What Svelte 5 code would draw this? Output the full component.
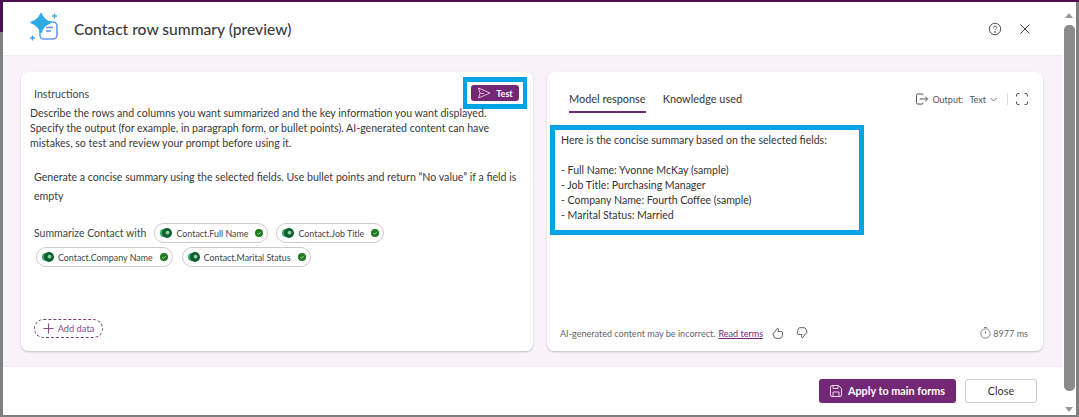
<script>
	const row1 = ['Contact.Full Name', 'Contact.Job Title']
	const row2 = ['Contact.Company Name', 'Contact.Marital Status']
	const lines = [
		'Here is the concise summary based on the selected fields:',
		'',
		'- Full Name: Yvonne McKay (sample)',
		'- Job Title: Purchasing Manager',
		'- Company Name: Fourth Coffee (sample)',
		'- Marital Status: Married'
	]
</script>

{#snippet chip(label)}
	<span class="chip">
		<svg width="12" height="10" viewBox="0 0 12 10">
			<circle cx="4" cy="5" r="4" fill="#34a868" />
			<circle cx="7" cy="5" r="5" fill="#0f5f30" />
			<circle cx="7.500" cy="4.600" r="1.900" fill="#8fd0a4" />
		</svg>
		<span>{label}</span>
		<span class="ok">
			<svg width="8" height="8" viewBox="0 0 8 8" fill="none" stroke="#cfe8cf" stroke-width=".8"><path d="M2.200 4.100l1.300 1.300 2.400-2.600" /></svg>
		</span>
	</span>
{/snippet}

<div class="screen">
	<div class="topbar"></div>
	<div class="middle">
		<div class="dialog">
			<header>
				<svg class="logo" width="32" height="34" viewBox="0 0 32 34">
					<defs>
						<linearGradient id="lg" x1="0" y1="0" x2="1" y2="1">
							<stop offset="0" stop-color="#39b6ea" />
							<stop offset="1" stop-color="#7a8cf5" />
						</linearGradient>
					</defs>
					<rect x="11" y="10" width="17" height="17" rx="4" fill="#fff" stroke="url(#lg)" stroke-width="1.600" />
					<path d="M12 2 Q14 8 21 10.500 Q14 13 12 20 Q10 13 2.500 10.500 Q10 8 12 2Z" fill="#2eabe6" stroke="#2eabe6" stroke-width="2" stroke-linejoin="round" />
					<path d="M17 15.500h7M17 19h5" stroke="#5a93ee" stroke-width="1.500" />
					<path d="M25.500 1.500v5M23 4h5" stroke="#35b3e8" stroke-width="1.400" />
					<path d="M3.500 23.500v5M1 26h5" stroke="#4a9aea" stroke-width="1.400" />
				</svg>
				<h1>Contact row summary (preview)</h1>
				<div class="head-icons">
					<svg width="14" height="14" viewBox="0 0 14 14" fill="none" stroke="#555">
						<circle cx="7" cy="7" r="5.700" />
						<path d="M5.400 5.600c0-2 3.300-2 3.300-.1 0 1.200-1.700 1.300-1.700 2.700" />
						<circle cx="7" cy="10" r=".4" fill="#555" />
					</svg>
					<svg width="12" height="12" viewBox="0 0 12 12" stroke="#444"><path d="M1.500 1.500l9 9M10.500 1.500l-9 9" /></svg>
				</div>
			</header>

			<main>
				<section class="card left">
					<div class="card-top">
						<span class="label">Instructions</span>
						<div class="test-wrap">
							<button class="test">
								<svg width="14" height="12" viewBox="0 0 14 12" fill="none" stroke="#e8cfe8" stroke-width=".9">
									<path d="M1.500 1L13 6 1.500 11 3 6.300 1.500 1zM3 6.300h4" />
								</svg>
								Test
							</button>
						</div>
					</div>
					<p class="desc">
						Describe the rows and columns you want summarized and the key information you want displayed.
						Specify the output (for example, in paragraph form, or bullet points). AI-generated content can have
						mistakes, so test and review your prompt before using it.
					</p>
					<p class="prompt">Generate a concise summary using the selected fields. Use bullet points and return “No value” if a field is empty</p>
					<div class="chips first">
						<span class="with">Summarize Contact with</span>
						{#each row1 as c}{@render chip(c)}{/each}
					</div>
					<div class="chips second">
						{#each row2 as c}{@render chip(c)}{/each}
					</div>
					<button class="add">
						<svg width="11" height="11" viewBox="0 0 11 11" stroke="#8a4a8c" stroke-width="1.100"><path d="M5.500 .5v10M.5 5.500h10" /></svg>
						Add data
					</button>
				</section>

				<section class="card right">
					<div class="tabs">
						<span class="tab active">Model response</span>
						<span class="tab">Knowledge used</span>
						<div class="output">
							<svg width="12" height="12" viewBox="0 0 13 12" fill="none" stroke="#444">
								<path d="M7.500 2V1.500q0-1-1-1H2q-1.500 0-1.500 1.500v8q0 1.500 1.500 1.500h4.500q1 0 1-1V10M4 6h8.500M10 3.500L12.500 6 10 8.500" />
							</svg>
							<span class="out-label">Output:</span>
							<span class="out-val">Text</span>
							<svg width="7" height="5" viewBox="0 0 7 5" fill="none" stroke="#777"><path d="M.5 1l3 3 3-3" /></svg>
							<span class="sep"></span>
							<svg width="12" height="12" viewBox="0 0 12 12" fill="none" stroke="#555">
								<path d="M.5 3.500V2q0-1.500 1.500-1.500h1.500M8.500 .5H10q1.500 0 1.500 1.500v1.500M11.500 8.500V10q0 1.500-1.500 1.500H8.500M3.500 11.500H2Q.5 11.500 .5 10V8.500" />
							</svg>
						</div>
					</div>
					<div class="response">
						{#each lines as l}<div class="line">{l}</div>{/each}
					</div>
					<div class="card-foot">
						<span>AI-generated content may be incorrect.</span>
						<a href="#terms">Read terms</a>
						<svg class="thumb" width="12" height="12" viewBox="0 0 12 12" fill="none" stroke="#555" stroke-width=".9">
							<path d="M1 6.500Q1 5.500 2.500 5.500L5 1.500q1-.8 1.500.5L6 4.500h3q1.800 0 1.600 1.500L10 9.500q-.4 1.800-2 1.800H4q-1.500 0-2-1.500z" />
						</svg>
						<svg class="thumb down" width="12" height="12" viewBox="0 0 12 12" fill="none" stroke="#555" stroke-width=".9">
							<path d="M11 5.500Q11 6.500 9.500 6.500L7 10.500q-1 .8-1.500-.5L6 7.500H3Q1.200 7.500 1.400 6L2 2.500Q2.400 .7 4 .7h4q1.500 0 2 1.500z" />
						</svg>
						<span class="time">
							<svg width="11" height="12" viewBox="0 0 11 12" fill="none" stroke="#666" stroke-width=".8">
								<circle cx="5.500" cy="6.500" r="4.700" /><path d="M5.500 4v2.800M4 .5h3" />
							</svg>
							8977 ms
						</span>
					</div>
				</section>
			</main>

			<footer>
				<button class="apply">
					<svg width="12" height="12" viewBox="0 0 12 12" fill="none" stroke="#ecd6ec">
						<path d="M.5 2q0-1.500 1.500-1.500h6.500l3 3V10q0 1.500-1.500 1.500H2Q.5 11.500.5 10zM3 .5v3h5v-3M3 11.500V7h6v4.500" />
					</svg>
					Apply to main forms
				</button>
				<button class="close">Close</button>
			</footer>
		</div>
		<div class="scroll">
			<span class="arrow up"></span>
			<div class="thumbbar"></div>
			<span class="arrow dn"></span>
		</div>
	</div>
</div>

<style>
	:global(body) {
		margin: 0;
		overflow: hidden;
	}
	.screen {
		width: 1079px;
		height: 417px;
		background: #808080;
		display: flex;
		flex-direction: column;
		font-family: Lato, "Noto Sans", sans-serif;
		color: #333;
		position: relative;
	}
	.topbar {
		height: 2px;
		background: #4a0f4f;
		flex: none;
	}
	.middle {
		display: flex;
		margin-left: 3px;
		margin-right: 3px;
		height: 413px;
		background: #fff;
	}
	.screen::before {
		content: '';
		position: absolute;
		left: 0;
		top: 2px;
		width: 3px;
		height: 30px;
		background: #4a0f4f;
	}
	.dialog {
		width: 1059px;
		display: flex;
		flex-direction: column;
	}
	header {
		height: 54px;
		flex: none;
		display: flex;
		align-items: center;
		padding-left: 26px;
		padding-right: 31px;
		box-sizing: border-box;
		border-bottom: 1px solid #f0ebf0;
	}
	.logo {
		margin-top: 1px;
	}
	h1 {
		font-size: 15.600px;
		font-weight: 500;
		color: #3c3c3c;
		margin: 0 0 0 13px;
	}
	.head-icons {
		margin-left: auto;
		display: flex;
		align-items: center;
		gap: 17px;
	}
	main {
		flex: 1;
		background: #f9f3f9;
		display: flex;
		gap: 14px;
		padding: 16px 19px 15px 18px;
		min-height: 0;
	}
	.card {
		background: #fff;
		border-radius: 7px;
		box-shadow: 0 1px 2px rgba(0, 0, 0, .22);
		box-sizing: border-box;
		position: relative;
	}
	.left {
		width: 512px;
		font-size: 10.600px;
		line-height: 15px;
		display: flex;
		flex-direction: column;
		padding: 5px 9px 0;
	}
	.card-top {
		display: flex;
		justify-content: space-between;
		align-items: center;
		height: 32px;
		padding-left: 4px;
	}
	.label {
		color: #444;
		padding-top: 2px;
	}
	.test-wrap {
		border-style: solid;
		border-color: #00a4e4;
		border-width: 5px 4px;
		padding: 3px 4px;
		margin-right: -3px;
		display: flex;
	}
	.test {
		width: 48px;
		height: 16px;
		background: #742774;
		color: #fff;
		border: 0;
		border-radius: 3px;
		font: 700 9px Lato, sans-serif;
		display: flex;
		align-items: center;
		justify-content: center;
		gap: 5px;
		padding: 0;
	}
	.desc {
		margin: -3px 0 0;
		color: #3a3a3a;
		width: 470px;
	}
	.prompt {
		margin: 17px 0 0 4px;
		color: #3a3a3a;
		font-size: 10.600px;
		line-height: 19px;
		width: 490px;
	}
	.chips {
		display: flex;
		align-items: center;
	}
	.first {
		margin-top: 17px;
		padding-left: 4px;
		gap: 8px;
	}
	.second {
		margin-top: 4px;
		padding-left: 6px;
		gap: 9px;
	}
	.with {
		color: #444;
		font-size: 10.500px;
	}
	.chip {
		height: 20px;
		box-sizing: border-box;
		border: 1px solid #cfcaca;
		border-radius: 10px;
		display: inline-flex;
		align-items: center;
		gap: 4px;
		padding: 0 4px 0 5px;
		font-size: 8.900px;
		color: #444;
	}
	.ok {
		width: 8px;
		height: 8px;
		border-radius: 50%;
		background: #1c7a1c;
		margin-left: 3px;
		display: flex;
	}
	.add {
		position: absolute;
		left: 13px;
		bottom: 13px;
		height: 19px;
		width: 69px;
		box-sizing: border-box;
		border: 1px dashed #7c3a7e;
		border-radius: 10px;
		background: #fff;
		color: #8a4a8c;
		font: 9.300px Lato, sans-serif;
		display: flex;
		align-items: center;
		justify-content: center;
		gap: 4px;
		padding: 0;
	}
	.right {
		width: 496px;
		display: flex;
		flex-direction: column;
	}
	.tabs {
		display: flex;
		align-items: flex-start;
		height: 53px;
		padding: 18px 15px 0 22px;
		box-sizing: border-box;
		font-size: 10.900px;
		gap: 17px;
	}
	.tab {
		color: #444;
		height: 21px;
		line-height: 18px;
		font-weight: 500;
	}
	.active {
		border-bottom: 1px solid #742774;
		box-shadow: 0 1px 0 #742774;
	}
	.output {
		margin-left: auto;
		display: flex;
		align-items: center;
		gap: 4px;
		height: 18px;
		font-size: 9px;
		color: #555;
	}
	.out-val {
		margin-left: 2px;
	}
	.sep {
		width: 1px;
		height: 12px;
		background: #ddd;
		margin: 0 4px 0 6px;
	}
	.response {
		margin-left: 3px;
		width: 314px;
		height: 110px;
		box-sizing: border-box;
		border: 5px solid #00a4e4;
		padding: 3px 6px;
		font-size: 10.550px;
		line-height: 15px;
		color: #333;
	}
	.line {
		height: 15px;
		white-space: nowrap;
	}
	.card-foot {
		position: absolute;
		left: 13px;
		right: 15px;
		bottom: 12px;
		display: flex;
		align-items: center;
		font-size: 9.050px;
		color: #666;
		gap: 2px;
	}
	.card-foot a {
		color: #742774;
		margin-left: 1px;
	}
	.thumb {
		margin-left: 7px;
	}
	.down {
		margin-left: 10px;
	}
	.time {
		margin-left: auto;
		display: flex;
		align-items: center;
		gap: 2px;
	}
	footer {
		height: 49px;
		flex: none;
		box-sizing: border-box;
		border-top: 1px solid #f0ebf0;
		display: flex;
		justify-content: flex-end;
		align-items: center;
		gap: 9px;
		padding-right: 25px;
		padding-bottom: 1px;
	}
	footer button {
		height: 24px;
		border-radius: 3px;
		font: 700 10.800px Lato, sans-serif;
		padding: 0;
		box-sizing: border-box;
	}
	.apply {
		width: 137px;
		background: #742774;
		color: #fff;
		border: 0;
		display: flex;
		align-items: center;
		justify-content: center;
		gap: 6px;
	}
	.close {
		width: 72px;
		background: #fff;
		color: #333;
		border: 1px solid #ccc;
		font-weight: 400;
	}
	.scroll {
		flex: 1;
		position: relative;
	}
	.thumbbar {
		position: absolute;
		left: 2px;
		right: 1px;
		top: 23px;
		height: 366px;
		background: #8a8a8a;
		border-radius: 5px;
	}
	.arrow {
		position: absolute;
		left: 3px;
		width: 0;
		height: 0;
		border-left: 4px solid transparent;
		border-right: 4px solid transparent;
	}
	.up {
		top: 11px;
		border-bottom: 5px solid #999;
	}
	.dn {
		bottom: 3px;
		border-top: 5px solid #999;
	}
</style>
